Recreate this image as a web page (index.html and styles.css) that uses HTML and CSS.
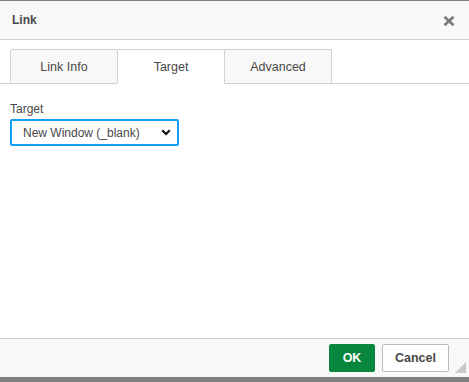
FILE: index.html
```html
<!DOCTYPE html>
<html lang="en">
<head>
  <meta charset="UTF-8" />
  <title>Link</title>
  <link rel="stylesheet" href="styles.css">
</head>
<body>

  <div class="dialog">
    <div class="dialog-title">
      <span>Link</span>
      <a class="dialog-close" title="Close">
        <svg width="12" height="10" viewBox="0 0 12 10">
          <path d="M1.5 0.8L10.5 9.2M10.5 0.8L1.5 9.2" stroke="#7a7a7a" stroke-width="2.8" />
        </svg>
      </a>
    </div>

    <div class="tabs">
      <a class="tab">Link Info</a>
      <a class="tab selected">Target</a>
      <a class="tab">Advanced</a>
    </div>

    <div class="dialog-body">
      <label class="field-label" for="target">Target</label>
      <div class="select-wrap">
        <select id="target" class="select">
          <option>New Window (_blank)</option>
        </select>
        <svg class="chevron" width="10" height="7" viewBox="0 0 10 7">
          <path d="M1.2 1.3L5 5L8.8 1.3" fill="none" stroke="#111" stroke-width="2.2" />
        </svg>
      </div>
    </div>

    <div class="dialog-footer">
      <button class="btn btn-ok">OK</button>
      <button class="btn">Cancel</button>
      <span class="resize-grip"></span>
    </div>
  </div>

</body>
</html>
```

FILE: styles.css
```css
* {
  margin: 0;
  padding: 0;
  box-sizing: border-box;
}

body {
  font-family: 'Liberation Sans', Arial, sans-serif;
  font-size: 12px;
  color: #484848;
  background-color: #808080;
  padding-top: 1px;
  height: 382px;
  overflow: hidden;
}

.dialog {
  background: #fff;
  height: 376px;
  display: flex;
  flex-direction: column;
}

/* title bar */
.dialog-title {
  height: 39px;
  background: #f8f8f8;
  border-bottom: 1px solid #d1d1d1;
  display: flex;
  align-items: center;
  justify-content: space-between;
  padding: 0 14px 0 12px;
  font-weight: bold;
  font-size: 12px;
}

.dialog-close {
  display: flex;
  margin-top: 2px;
}

/* tabs */
.tabs {
  display: flex;
  padding: 9px 0 0 10px;
  border-bottom: 1px solid #d1d1d1;
}

.tab {
  width: 108px;
  height: 35px;
  margin-right: -1px;
  margin-bottom: -1px;
  display: flex;
  align-items: center;
  justify-content: center;
  background: #f8f8f8;
  border: 1px solid #d1d1d1;
  border-radius: 2px 2px 0 0;
  font-size: 12.5px;
  color: #484848;
}

.tab.selected {
  background: #fff;
  border-bottom-color: #fff;
  position: relative;
}

/* body */
.dialog-body {
  flex: 1;
  padding: 18px 10px;
}

.field-label {
  display: block;
  margin-bottom: 3px;
  font-size: 12px;
  color: #484848;
}

.select-wrap {
  position: relative;
  width: 169px;
}

.select {
  appearance: none;
  -webkit-appearance: none;
  width: 169px;
  height: 27px;
  border: 2px solid #139ff7;
  border-radius: 2px;
  background: #fff;
  padding: 0 11px;
  font-family: 'Liberation Sans', Arial, sans-serif;
  font-size: 12px;
  color: #484848;
  outline: none;
}

.chevron {
  position: absolute;
  right: 8px;
  top: 10px;
  pointer-events: none;
}

/* footer */
.dialog-footer {
  height: 39px;
  background: #f8f8f8;
  border-top: 1px solid #d1d1d1;
  display: flex;
  justify-content: flex-end;
  align-items: flex-start;
  gap: 7px;
  padding: 5px 20px 0 0;
  position: relative;
}

.btn {
  height: 28px;
  width: 67px;
  border: 1px solid #bcbcbc;
  border-radius: 2px;
  background: #fff;
  font-family: 'Liberation Sans', Arial, sans-serif;
  font-size: 12.5px;
  font-weight: bold;
  color: #484848;
}

.btn-ok {
  width: 46px;
  background: #09863e;
  border-color: #09863e;
  color: #fff;
}

.resize-grip {
  position: absolute;
  right: 3px;
  bottom: 4px;
  width: 0;
  height: 0;
  border-left: 11px solid transparent;
  border-bottom: 11px solid #c8c8c8;
}
```
